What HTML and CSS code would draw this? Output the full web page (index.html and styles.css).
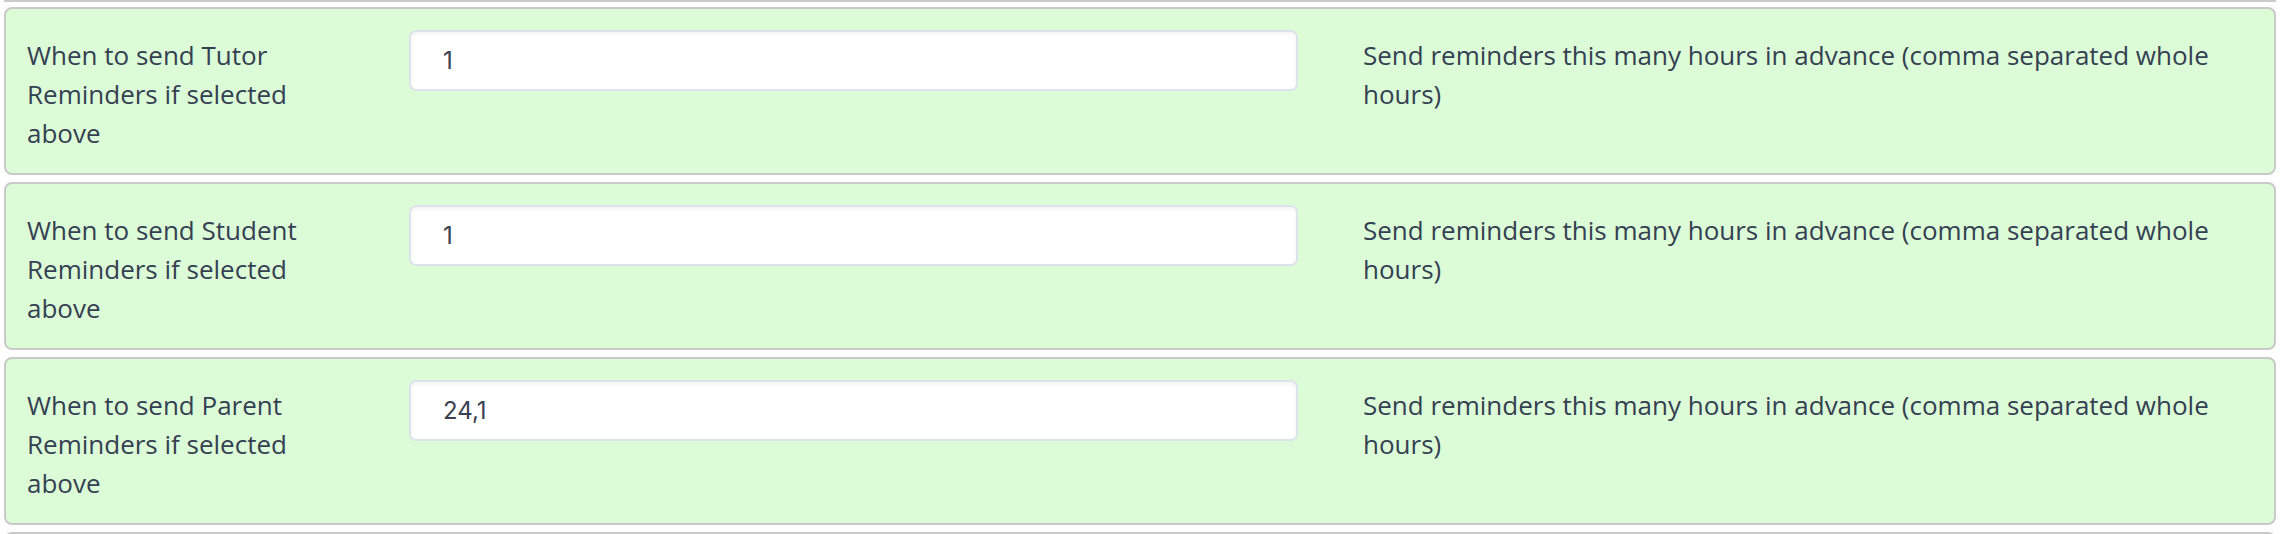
FILE: index.html
```html
<!DOCTYPE html>
<html lang="en">
<head>
    <meta charset="UTF-8">
    <meta name="viewport" content="width=device-width, initial-scale=1.0">
    <title>Reminder Settings</title>
    <link rel="stylesheet" href="styles.css">
</head>
<body>
    <div class="settings">
        <!-- end of the row above, scrolled off -->
        <div class="card-tail"></div>

        <div class="setting-row">
            <label class="setting-label" for="tutor-hours">When to send Tutor Reminders if selected above</label>
            <div class="setting-field">
                <input id="tutor-hours" class="setting-input" type="text" value="1">
            </div>
            <p class="setting-help">Send reminders this many hours in advance (comma separated whole hours)</p>
        </div>

        <div class="setting-row">
            <label class="setting-label" for="student-hours">When to send Student Reminders if selected above</label>
            <div class="setting-field">
                <input id="student-hours" class="setting-input" type="text" value="1">
            </div>
            <p class="setting-help">Send reminders this many hours in advance (comma separated whole hours)</p>
        </div>

        <div class="setting-row">
            <label class="setting-label" for="parent-hours">When to send Parent Reminders if selected above</label>
            <div class="setting-field">
                <input id="parent-hours" class="setting-input" type="text" value="24,1">
            </div>
            <p class="setting-help">Send reminders this many hours in advance (comma separated whole hours)</p>
        </div>

        <!-- start of the next row, below the fold -->
        <div class="card-head"></div>
    </div>
</body>
</html>
```

FILE: styles.css
```css
body {
    margin: 0;
    font-family: "Open Sans", "Noto Sans", sans-serif;
    color: #354052;
    background: #ffffff;
    overflow: hidden;
}
.settings {
    padding: 0 8px 0 4px;
}
.card-tail {
    height: 0;
    border: 2px solid #c9c9c9;
    border-top: none;
    border-radius: 0 0 8px 8px;
    margin-bottom: 5px;
}
.card-head {
    height: 20px;
    background-color: #dcfcd7;
    border: 2px solid #c9c9c9;
    border-bottom: none;
    border-radius: 8px 8px 0 0;
}
.setting-row {
    display: grid;
    grid-template-columns: 382px 954px 1fr;
    align-items: start;
    background-color: #dcfcd7;
    border: 2px solid #c9c9c9;
    border-radius: 8px;
    padding: 21px 21px 20px 21px;
    margin-bottom: 7px;
    font-size: 26px;
    line-height: 1.5;
}
.setting-label {
    padding-top: 6px;
    padding-right: 72px;
}
.setting-field {
    padding-right: 65px;
}
.setting-input {
    box-sizing: border-box;
    width: 100%;
    height: 61px;
    padding: 0 32px;
    font-family: "Inter", "Roboto", sans-serif;
    font-size: 24px;
    color: #3a4150;
    background: #ffffff;
    border: 2px solid #dce3ed;
    border-radius: 7px;
    box-shadow: inset 0 2px 4px rgba(0, 0, 0, 0.05);
    outline: none;
}
.setting-help {
    margin: 0;
    padding-top: 6px;
}
```
